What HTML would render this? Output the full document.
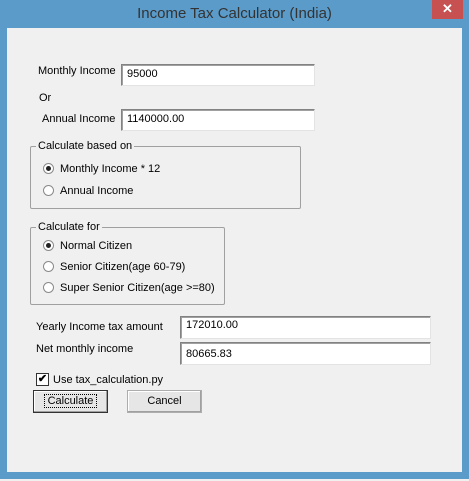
<!DOCTYPE html>
<html><head><style>
*{margin:0;padding:0;box-sizing:border-box}
body{width:469px;height:481px;background:#f0f0f0;font-family:"Liberation Sans",sans-serif;font-size:11px;color:#000;position:relative;overflow:hidden}
.win{position:absolute;left:0;top:0;width:469px;height:479px;background:#5b9bc9}
.client{position:absolute;left:7px;top:28px;width:455px;height:444px;background:#f0f0f0}
.title{position:absolute;left:0;top:5px;width:469px;text-align:center;font-size:15px;color:#333}
.close{position:absolute;left:432px;top:0;width:31px;height:19px;background:#c75050;color:#fff;text-align:center;font-size:13px;line-height:18px;font-weight:bold}
.a{position:absolute;white-space:nowrap}
.tb{position:absolute;background:#fff;border:1px solid #e3e3e3;border-top-color:#828282;border-left-color:#828282;box-shadow:inset 1px 1px 0 #a0a0a0;padding:3px 0 0 5px}
.grp{position:absolute;border:1px solid #a0a0a0;border-radius:2px}
.lg{position:absolute;background:#f0f0f0;padding:0 2px;white-space:nowrap}
.rd{position:absolute;width:11px;height:11px;border-radius:50%;border:1px solid #8a8a8a;background:#fff}
.rd.on::after{content:"";position:absolute;left:2px;top:2px;width:5px;height:5px;border-radius:50%;background:#222}
.btn{position:absolute;height:23px;background:#e6e6e6;border:1px solid #adadad;box-shadow:inset -1px -1px 0 #a0a0a0,inset 1px 1px 0 #fff;text-align:center;line-height:20px}
</style></head><body>
<div class="win"></div>
<div class="title">Income Tax Calculator (India)</div>
<div class="close">✕</div>
<div class="client"></div>
<div class="a" style="left:38px;top:65px">Monthly Income</div>
<div class="tb" style="left:121px;top:64px;width:194px;height:22px">95000</div>
<div class="a" style="left:39px;top:92px">Or</div>
<div class="a" style="left:42px;top:113px">Annual Income</div>
<div class="tb" style="left:121px;top:109px;width:194px;height:22px">1140000.00</div>

<div class="grp" style="left:30px;top:146px;width:271px;height:63px"></div>
<div class="lg" style="left:36px;top:140px">Calculate based on</div>
<div class="rd on" style="left:43px;top:163px"></div><div class="a" style="left:60px;top:163px">Monthly Income * 12</div>
<div class="rd" style="left:43px;top:185px"></div><div class="a" style="left:60px;top:185px">Annual Income</div>

<div class="grp" style="left:30px;top:227px;width:195px;height:78px"></div>
<div class="lg" style="left:36px;top:221px">Calculate for</div>
<div class="rd on" style="left:43px;top:240px"></div><div class="a" style="left:60px;top:240px">Normal Citizen</div>
<div class="rd" style="left:43px;top:261px"></div><div class="a" style="left:60px;top:261px">Senior Citizen(age 60-79)</div>
<div class="rd" style="left:43px;top:282px"></div><div class="a" style="left:60px;top:282px">Super Senior Citizen(age &gt;=80)</div>

<div class="a" style="left:36px;top:321px">Yearly Income tax amount</div>
<div class="tb" style="left:180px;top:316px;width:251px;height:23px;padding-top:2px">172010.00</div>
<div class="a" style="left:36px;top:343px">Net monthly income</div>
<div class="tb" style="left:180px;top:342px;width:251px;height:23px;padding-top:5px">80665.83</div>

<div style="position:absolute;left:36px;top:373px;width:13px;height:13px;border:1px solid #333;background:#fff;font-size:11px;line-height:11px;text-align:center;font-weight:bold">✔</div>
<div class="a" style="left:53px;top:374px">Use tax_calculation.py</div>
<div class="btn" style="left:33px;top:390px;width:75px;border-color:#333"><span style="outline:1px dotted #000;padding:0 3px">Calculate</span></div>
<div class="btn" style="left:127px;top:390px;width:75px">Cancel</div>
</body></html>
